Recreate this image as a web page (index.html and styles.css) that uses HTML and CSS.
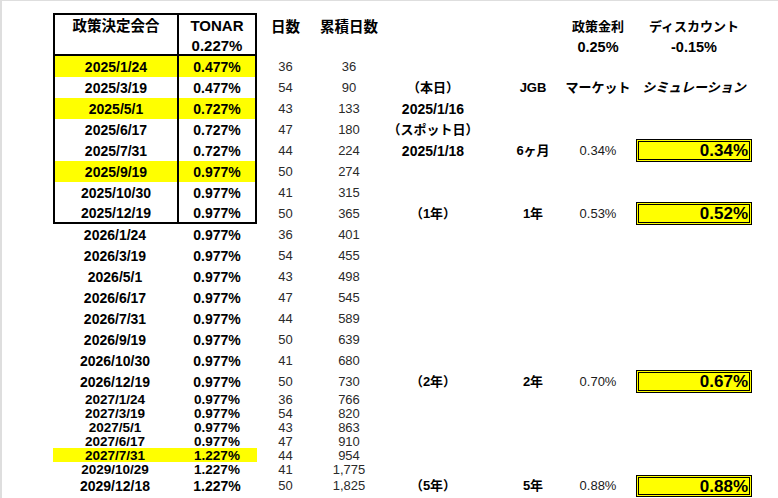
FILE: index.html
```html
<!DOCTYPE html>
<html lang="ja">
<head>
<meta charset="utf-8">
<title>政策決定会合</title>
<link rel="stylesheet" href="styles.css">
</head>
<body>
<div class="sheet">
  <!-- header -->
  <div class="cell hd c1 bl bt bb"><span>政策決定会合</span></div>
  <div class="cell hd c2 bl br bt bb"><span>TONAR</span><span>0.227%</span></div>
  <div class="cell hd hj c3"><span>日数</span></div>
  <div class="cell hd hj c4"><span>累積日数</span></div>
  <div class="cell hd hr c8"><span>政策金利</span><span class="hv">0.25%</span></div>
  <div class="cell hd hr c9"><span>ディスカウント</span><span class="hv">-0.15%</span></div>

  <!-- row 0 -->
  <div class="cell c1 bl yel">2025/1/24</div>
  <div class="cell c2 bl br yel">0.477%</div>
  <div class="cell c3 plain">36</div>
  <div class="cell c4 plain">36</div>
  <!-- row 1 -->
  <div class="cell c1 bl">2025/3/19</div>
  <div class="cell c2 bl br">0.477%</div>
  <div class="cell c3 plain">54</div>
  <div class="cell c4 plain">90</div>
  <div class="cell c5 rt">（本日）</div>
  <div class="cell c7 rt">JGB</div>
  <div class="cell c8 rt">マーケット</div>
  <div class="cell c9 rt it">シミュレーション</div>
  <!-- row 2 -->
  <div class="cell c1 bl yel">2025/5/1</div>
  <div class="cell c2 bl br yel">0.727%</div>
  <div class="cell c3 plain">43</div>
  <div class="cell c4 plain">133</div>
  <div class="cell c5">2025/1/16</div>
  <!-- row 3 -->
  <div class="cell c1 bl">2025/6/17</div>
  <div class="cell c2 bl br">0.727%</div>
  <div class="cell c3 plain">47</div>
  <div class="cell c4 plain">180</div>
  <div class="cell c5 rt">（スポット日）</div>
  <!-- row 4 -->
  <div class="cell c1 bl">2025/7/31</div>
  <div class="cell c2 bl br">0.727%</div>
  <div class="cell c3 plain">44</div>
  <div class="cell c4 plain">224</div>
  <div class="cell c5">2025/1/18</div>
  <div class="cell c7 rt">6ヶ月</div>
  <div class="cell c8 rv">0.34%</div>
  <div class="cell c9 sim"><div class="simbox">0.34%</div></div>
  <!-- row 5 -->
  <div class="cell c1 bl yel">2025/9/19</div>
  <div class="cell c2 bl br yel">0.977%</div>
  <div class="cell c3 plain">50</div>
  <div class="cell c4 plain">274</div>
  <!-- row 6 -->
  <div class="cell c1 bl">2025/10/30</div>
  <div class="cell c2 bl br">0.977%</div>
  <div class="cell c3 plain">41</div>
  <div class="cell c4 plain">315</div>
  <!-- row 7 -->
  <div class="cell c1 bl bb">2025/12/19</div>
  <div class="cell c2 bl br bb">0.977%</div>
  <div class="cell c3 plain">50</div>
  <div class="cell c4 plain">365</div>
  <div class="cell c5 rt">（1年）</div>
  <div class="cell c7 rt">1年</div>
  <div class="cell c8 rv">0.53%</div>
  <div class="cell c9 sim"><div class="simbox">0.52%</div></div>
  <!-- row 8 -->
  <div class="cell c1">2026/1/24</div>
  <div class="cell c2">0.977%</div>
  <div class="cell c3 plain">36</div>
  <div class="cell c4 plain">401</div>
  <!-- row 9 -->
  <div class="cell c1">2026/3/19</div>
  <div class="cell c2">0.977%</div>
  <div class="cell c3 plain">54</div>
  <div class="cell c4 plain">455</div>
  <!-- row 10 -->
  <div class="cell c1">2026/5/1</div>
  <div class="cell c2">0.977%</div>
  <div class="cell c3 plain">43</div>
  <div class="cell c4 plain">498</div>
  <!-- row 11 -->
  <div class="cell c1">2026/6/17</div>
  <div class="cell c2">0.977%</div>
  <div class="cell c3 plain">47</div>
  <div class="cell c4 plain">545</div>
  <!-- row 12 -->
  <div class="cell c1">2026/7/31</div>
  <div class="cell c2">0.977%</div>
  <div class="cell c3 plain">44</div>
  <div class="cell c4 plain">589</div>
  <!-- row 13 -->
  <div class="cell c1">2026/9/19</div>
  <div class="cell c2">0.977%</div>
  <div class="cell c3 plain">50</div>
  <div class="cell c4 plain">639</div>
  <!-- row 14 -->
  <div class="cell c1">2026/10/30</div>
  <div class="cell c2">0.977%</div>
  <div class="cell c3 plain">41</div>
  <div class="cell c4 plain">680</div>
  <!-- row 15 -->
  <div class="cell c1">2026/12/19</div>
  <div class="cell c2">0.977%</div>
  <div class="cell c3 plain">50</div>
  <div class="cell c4 plain">730</div>
  <div class="cell c5 rt">（2年）</div>
  <div class="cell c7 rt">2年</div>
  <div class="cell c8 rv">0.70%</div>
  <div class="cell c9 sim"><div class="simbox">0.67%</div></div>
  <!-- row 16 -->
  <div class="cell c1 tight">2027/1/24</div>
  <div class="cell c2 tight">0.977%</div>
  <div class="cell c3 plain tight">36</div>
  <div class="cell c4 plain tight">766</div>
  <!-- row 17 -->
  <div class="cell c1 tight">2027/3/19</div>
  <div class="cell c2 tight">0.977%</div>
  <div class="cell c3 plain tight">54</div>
  <div class="cell c4 plain tight">820</div>
  <!-- row 18 -->
  <div class="cell c1 tight">2027/5/1</div>
  <div class="cell c2 tight">0.977%</div>
  <div class="cell c3 plain tight">43</div>
  <div class="cell c4 plain tight">863</div>
  <!-- row 19 -->
  <div class="cell c1 tight">2027/6/17</div>
  <div class="cell c2 tight">0.977%</div>
  <div class="cell c3 plain tight">47</div>
  <div class="cell c4 plain tight">910</div>
  <!-- row 20 -->
  <div class="cell c1 tight yel">2027/7/31</div>
  <div class="cell c2 tight yel">1.227%</div>
  <div class="cell c3 plain tight">44</div>
  <div class="cell c4 plain tight">954</div>
  <!-- row 21 -->
  <div class="cell c1 tight">2029/10/29</div>
  <div class="cell c2 tight">1.227%</div>
  <div class="cell c3 plain tight">41</div>
  <div class="cell c4 plain tight">1,775</div>
  <!-- row 22 -->
  <div class="cell c1">2029/12/18</div>
  <div class="cell c2">1.227%</div>
  <div class="cell c3 plain">50</div>
  <div class="cell c4 plain">1,825</div>
  <div class="cell c5 rt">（5年）</div>
  <div class="cell c7 rt">5年</div>
  <div class="cell c8 rv">0.88%</div>
  <div class="cell c9 sim"><div class="simbox">0.88%</div></div>
</div>
</body>
</html>
```
FILE: styles.css
```css
html, body {
  margin: 0;
  padding: 0;
}

body {
  background: #ffffff;
  border-top: 1px solid #dedede;
  border-left: 2px solid #dedede;
  min-height: 497px;
  font-family: "Liberation Sans", "Noto Sans CJK JP", sans-serif;
  color: #000000;
  overflow: hidden;
}

.sheet {
  display: grid;
  grid-template-columns: 124px 80px 57px 70px 98px 24px 54px 76px 116px;
  grid-template-rows: 43px repeat(16, 21px) repeat(6, 14px) 20px;
  padding: 12px 0 0 51px;
}

.cell {
  box-sizing: border-box;
  display: flex;
  align-items: center;
  justify-content: center;
  font-size: 14px;
  font-weight: bold;
  line-height: 14px;
  white-space: nowrap;
}

.c1 { grid-column: 1; }
.c2 { grid-column: 2; }
.c3 { grid-column: 3; }
.c4 { grid-column: 4; }
.c5 { grid-column: 5; }
.c7 { grid-column: 7; }
.c8 { grid-column: 8; }
.c9 { grid-column: 9; }

.hd {
  flex-direction: column;
  justify-content: flex-start;
  font-size: 15px;
  line-height: 20px;
  padding-top: 1px;
}

.hj {
  font-size: 14.5px;
  padding-top: 4px;
}

.hr {
  font-size: 13px;
  padding-top: 4px;
  line-height: 19px;
}

.hv {
  font-size: 14.5px;
  line-height: 23px;
}

.c1.hd {
  font-size: 14.5px;
}

.bl { border-left: 2px solid #000; }
.br { border-right: 2px solid #000; }
.bt { border-top: 2px solid #000; }
.bb { border-bottom: 2px solid #000; }

.yel { background: #ffff00; }

.tight {
  line-height: 11px;
  font-size: 13.5px;
}

.plain {
  font-weight: normal;
  font-size: 13px;
  color: #2a2a2a;
}

.rt {
  font-size: 13px;
}

.rv {
  font-size: 13px;
  font-weight: normal;
  color: #1a1a1a;
}

.it {
  font-style: italic;
}

.sim {
  align-items: stretch;
}

.simbox {
  flex: 1;
  margin: -1px 0;
  box-sizing: border-box;
  border: 3px double #000;
  background: #ffff00;
  display: flex;
  align-items: center;
  justify-content: flex-end;
  padding-right: 1px;
  font-size: 17px;
  font-weight: bold;
  line-height: 17px;
}
```
